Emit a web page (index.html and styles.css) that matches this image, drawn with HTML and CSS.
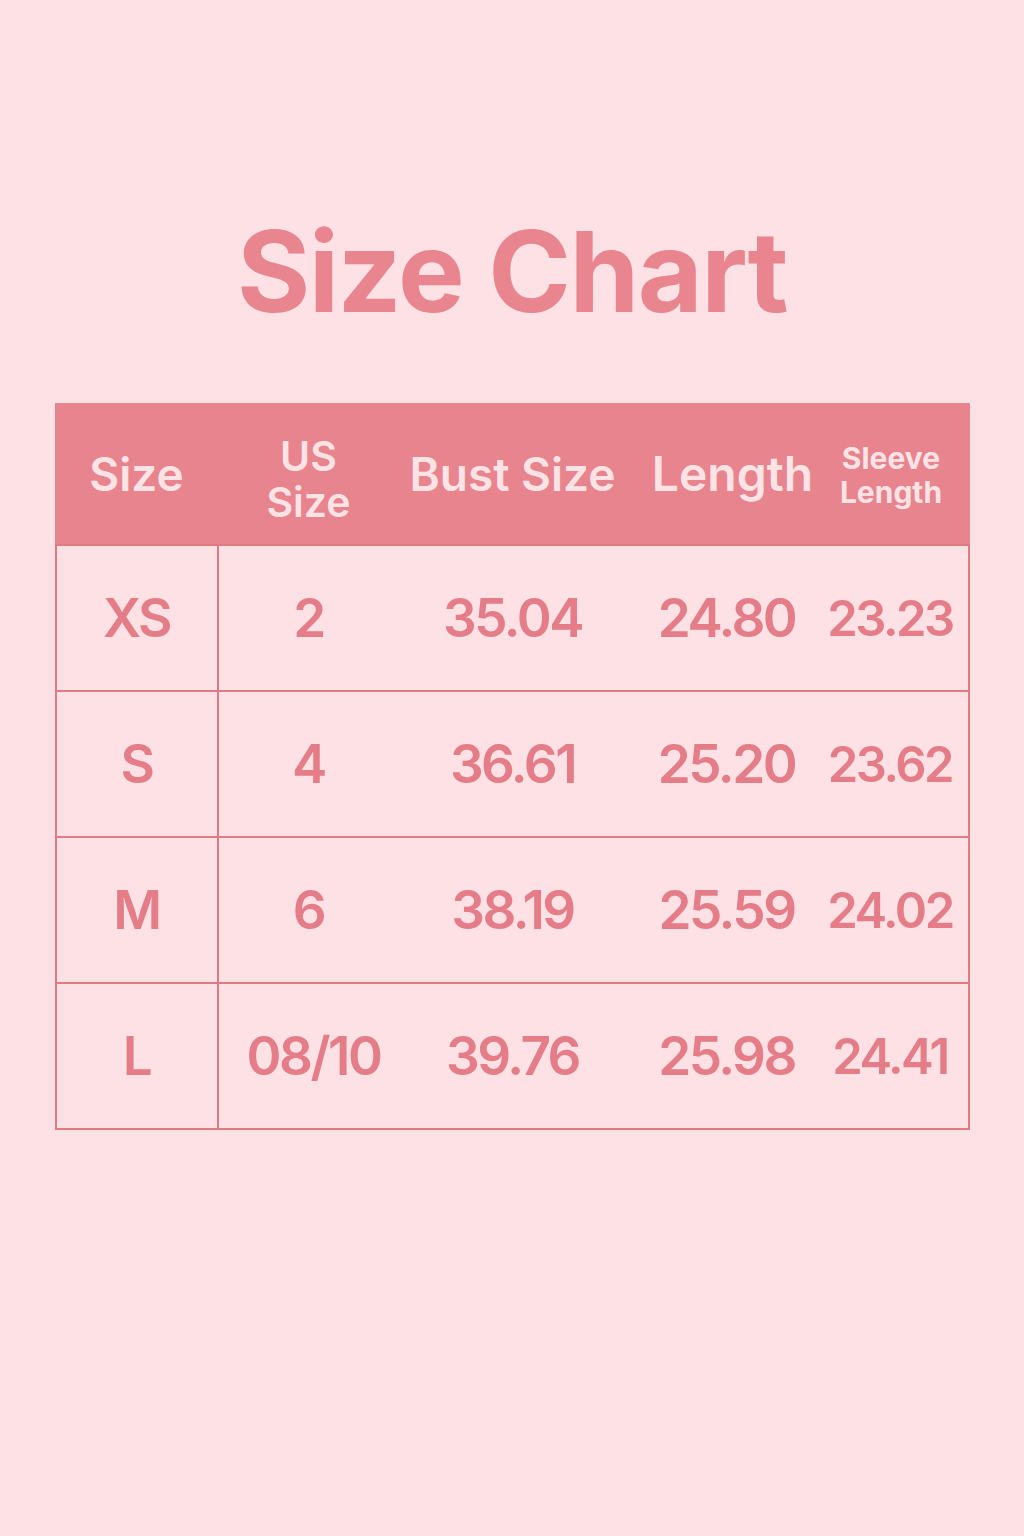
FILE: index.html
```html
<!DOCTYPE html>
<html>
<head>
<meta charset="utf-8">
<link rel="stylesheet" href="styles.css">
</head>
<body>
<div class="page">
  <h1 class="title">Size Chart</h1>
  <div class="chart">
    <div class="row head">
      <div class="cell c1">Size</div>
      <div class="cell c2 two"><span>US</span><span>Size</span></div>
      <div class="cell c3">Bust Size</div>
      <div class="cell c4">Length</div>
      <div class="cell c5 small"><span>Sleeve</span><span>Length</span></div>
    </div>
    <div class="row">
      <div class="cell c1 first">XS</div>
      <div class="cell c2">2</div>
      <div class="cell c3">35.04</div>
      <div class="cell c4">24.80</div>
      <div class="cell val5">23.23</div>
    </div>
    <div class="row">
      <div class="cell c1 first">S</div>
      <div class="cell c2">4</div>
      <div class="cell c3">36.61</div>
      <div class="cell c4">25.20</div>
      <div class="cell val5">23.62</div>
    </div>
    <div class="row">
      <div class="cell c1 first">M</div>
      <div class="cell c2">6</div>
      <div class="cell c3">38.19</div>
      <div class="cell c4">25.59</div>
      <div class="cell val5">24.02</div>
    </div>
    <div class="row">
      <div class="cell c1 first">L</div>
      <div class="cell c2 wide">08/10</div>
      <div class="cell c3">39.76</div>
      <div class="cell c4">25.98</div>
      <div class="cell val5">24.41</div>
    </div>
  </div>
</div>
</body>
</html>
```

FILE: styles.css
```css
html, body {
  margin: 0;
  padding: 0;
  background: #fde1e4;
}
.page {
  width: 1024px;
  height: 1536px;
  background: #fde1e4;
  font-family: Inter, "Liberation Sans", sans-serif;
  display: flex;
  flex-direction: column;
  align-items: center;
}
.title {
  margin: 206px 0 0 0;
  height: 197px;
  font-size: 112px;
  font-weight: 700;
  letter-spacing: -1.5px;
  color: #e8858e;
  line-height: 130px;
}
.chart {
  width: 915px;
  border: 2px solid #e27a84;
  border-top: none;
  box-sizing: border-box;
  color: #e47d87;
}
.row {
  display: grid;
  grid-template-columns: 162px 180px 228px 200px 141px;
  height: 146px;
  border-top: 2px solid #e27a84;
  box-sizing: border-box;
}
.row.head {
  height: 141px;
  border-top: none;
  background: #e8848d;
  color: #fde3e6;
  margin: 0 -2px;
  grid-template-columns: 164px 180px 228px 200px 143px;
}
.cell {
  display: flex;
  align-items: center;
  justify-content: center;
  text-align: center;
  font-size: 53px;
  font-weight: 600;
  letter-spacing: -2.5px;
}
.head .cell {
  font-size: 46px;
  font-weight: 600;
  letter-spacing: 0;
  line-height: 1;
}
.head .c4 {
  font-size: 48px;
  padding-left: 12px;
}
.head .two,
.head .small {
  flex-direction: column;
}
.head .two span {
  display: block;
  font-size: 41px;
  line-height: 46px;
}
.head .two {
  padding-top: 10px;
}
.head .small span {
  display: block;
  font-size: 30px;
  font-weight: 700;
  line-height: 34px;
}
.head .small {
  padding-right: 14px;
  padding-top: 2px;
}
.first {
  border-right: 2px solid #e27a84;
}
.wide {
  padding-left: 10px;
}
.val5 {
  font-size: 49px;
  padding-right: 14px;
}
```
